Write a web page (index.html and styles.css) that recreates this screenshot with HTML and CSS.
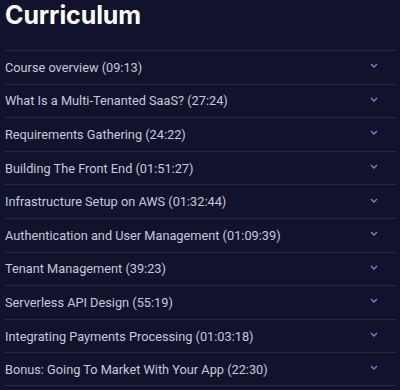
FILE: index.html
```html
<!DOCTYPE html>
<html lang="en">
<head>
    <meta charset="UTF-8">
    <meta name="viewport" content="width=device-width, initial-scale=1.0">
    <title>Curriculum</title>
    <link rel="stylesheet" href="styles.css">
</head>
<body>
    <h1>Curriculum</h1>
    <ul class="lessons">
        <li>Course overview (09:13)<svg class="chevron" viewBox="0 0 8 5"><path d="M1 1l3 3 3-3"/></svg></li>
        <li>What Is a Multi-Tenanted SaaS? (27:24)<svg class="chevron" viewBox="0 0 8 5"><path d="M1 1l3 3 3-3"/></svg></li>
        <li>Requirements Gathering (24:22)<svg class="chevron" viewBox="0 0 8 5"><path d="M1 1l3 3 3-3"/></svg></li>
        <li>Building The Front End (01:51:27)<svg class="chevron" viewBox="0 0 8 5"><path d="M1 1l3 3 3-3"/></svg></li>
        <li>Infrastructure Setup on AWS (01:32:44)<svg class="chevron" viewBox="0 0 8 5"><path d="M1 1l3 3 3-3"/></svg></li>
        <li>Authentication and User Management (01:09:39)<svg class="chevron" viewBox="0 0 8 5"><path d="M1 1l3 3 3-3"/></svg></li>
        <li>Tenant Management (39:23)<svg class="chevron" viewBox="0 0 8 5"><path d="M1 1l3 3 3-3"/></svg></li>
        <li>Serverless API Design (55:19)<svg class="chevron" viewBox="0 0 8 5"><path d="M1 1l3 3 3-3"/></svg></li>
        <li>Integrating Payments Processing (01:03:18)<svg class="chevron" viewBox="0 0 8 5"><path d="M1 1l3 3 3-3"/></svg></li>
        <li>Bonus: Going To Market With Your App (22:30)<svg class="chevron" viewBox="0 0 8 5"><path d="M1 1l3 3 3-3"/></svg></li>
    </ul>
</body>
</html>
```

FILE: styles.css
```css
body {
    margin: 0;
    padding: 0 4px 0 5px;
    background-color: #10132b;
    font-family: Roboto, sans-serif;
}
h1 {
    margin: 0;
    height: 50px;
    font-family: Inter, sans-serif;
    font-size: 25px;
    line-height: normal;
    font-weight: 700;
    letter-spacing: -0.1px;
    color: #ffffff;
}
.lessons {
    list-style: none;
    margin: 0;
    padding: 0;
}
.lessons li {
    display: flex;
    align-items: center;
    justify-content: space-between;
    height: 33.6px;
    box-sizing: border-box;
    border-top: 1px solid #262a44;
    font-size: 12.75px;
    color: #c6c9db;
}
.lessons li:last-child {
    border-bottom: 1px solid #262a44;
}
.chevron {
    width: 8px;
    height: 5px;
    margin-right: 18px;
    margin-top: -3px;
    fill: none;
    stroke: #8c72d8;
    stroke-width: 1.4;
}
```
